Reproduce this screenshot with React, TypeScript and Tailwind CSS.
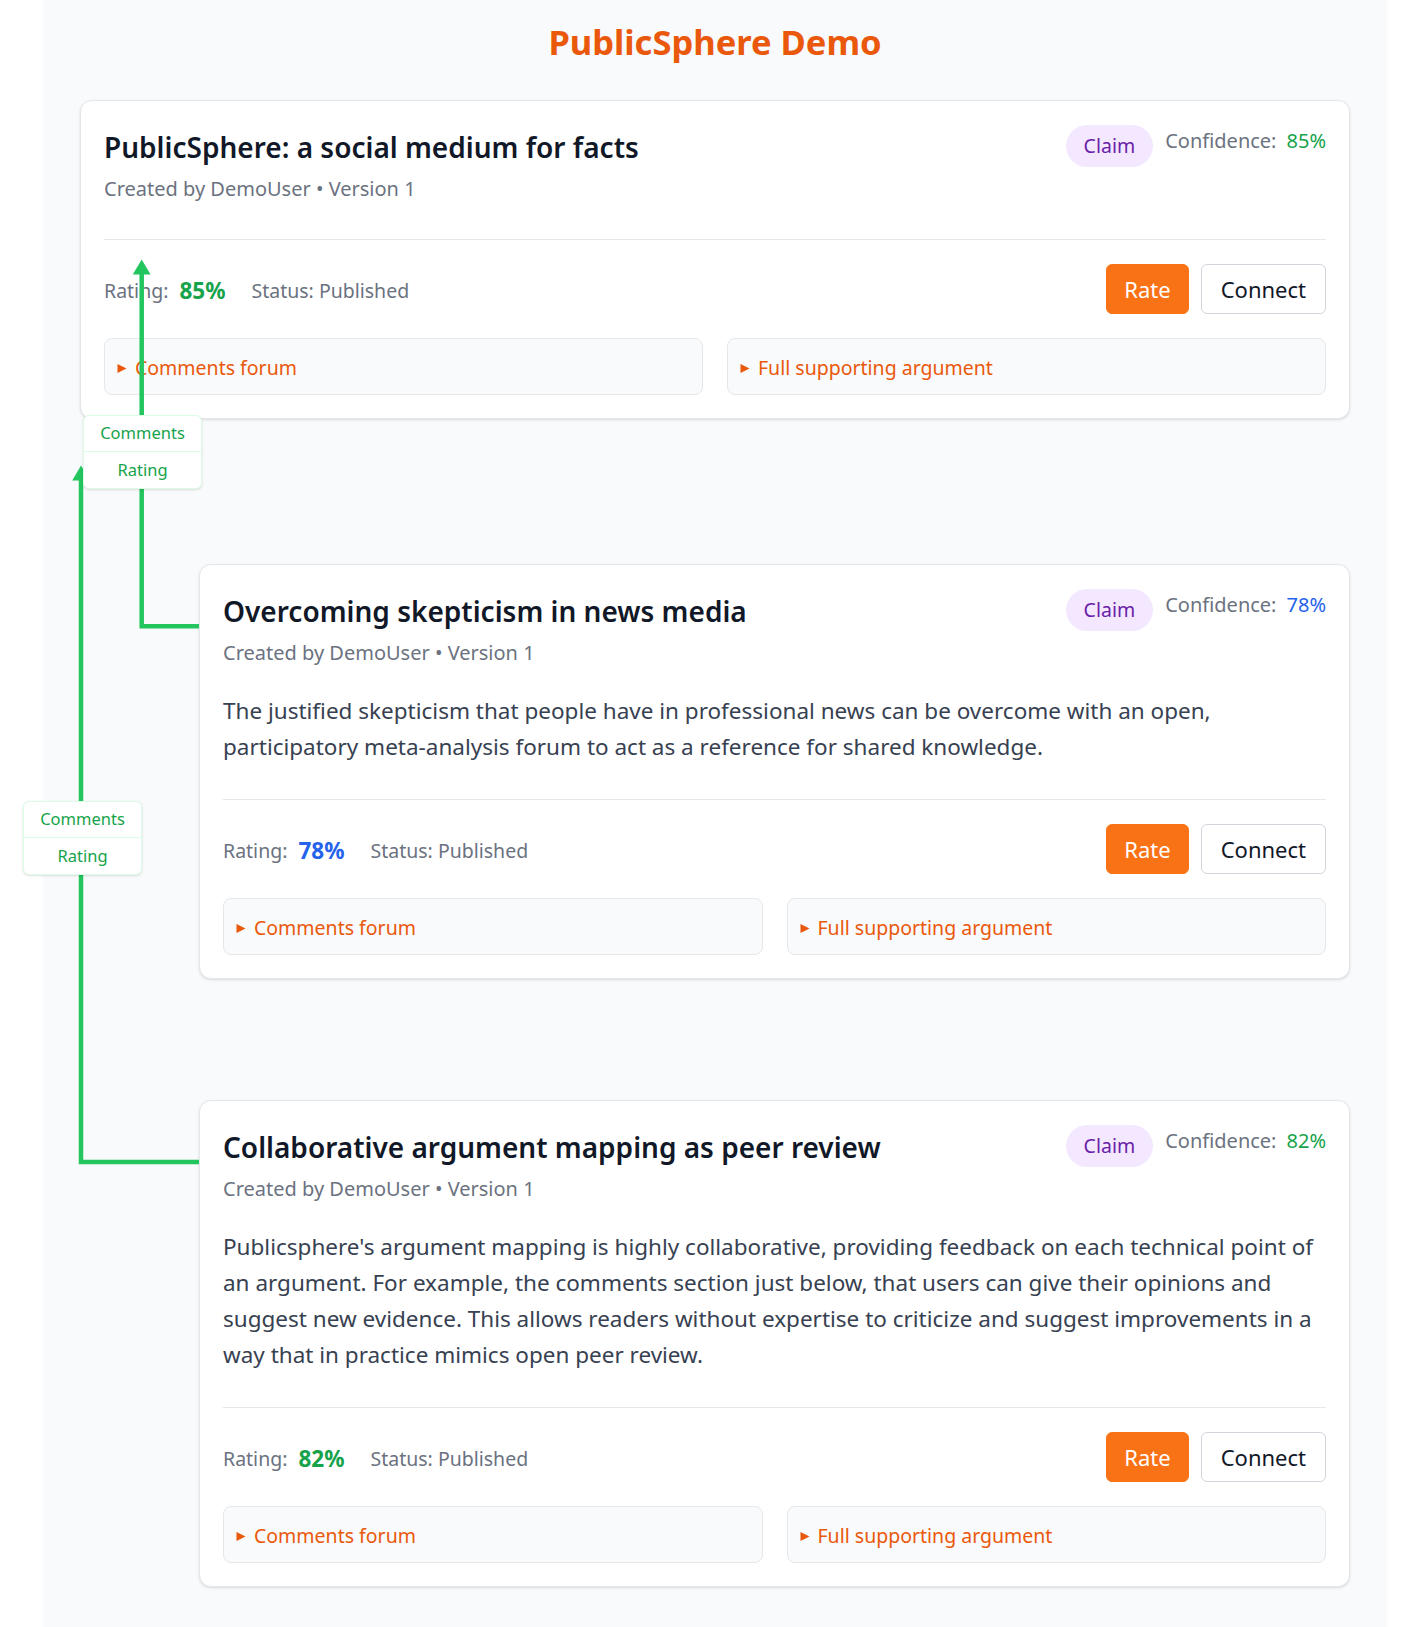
import clsx from 'clsx';

type Claim = {
  title: string;
  description?: string;
  confidence: number;
  tone: 'green' | 'blue';
};

const claims: Claim[] = [
  {
    title: 'PublicSphere: a social medium for facts',
    confidence: 85,
    tone: 'green',
  },
  {
    title: 'Overcoming skepticism in news media',
    description:
      'The justified skepticism that people have in professional news can be overcome with an open, participatory meta-analysis forum to act as a reference for shared knowledge.',
    confidence: 78,
    tone: 'blue',
  },
  {
    title: 'Collaborative argument mapping as peer review',
    description:
      "Publicsphere's argument mapping is highly collaborative, providing feedback on each technical point of an argument. For example, the comments section just below, that users can give their opinions and suggest new evidence. This allows readers without expertise to criticize and suggest improvements in a way that in practice mimics open peer review.",
    confidence: 82,
    tone: 'green',
  },
];

function Disclosure({ label }: { label: string }) {
  return (
    <details className="rounded-lg border border-[#e5e7eb] bg-[#f9fafb]">
      <summary className="flex cursor-pointer list-none items-center pb-[12px] pl-[12px] pt-[15px] text-[19.5px] leading-[28px] text-[#ea580c] [&::-webkit-details-marker]:hidden">
        <svg width="10" height="9" viewBox="0 0 10 9" className="shrink-0">
          <path d="M0.5 0 L9.5 4.5 L0.5 9 Z" fill="currentColor" />
        </svg>
        <span className="ml-[8px]">{label}</span>
      </summary>
    </details>
  );
}

function ClaimCard({ claim, className }: { claim: Claim; className?: string }) {
  const valueColor = claim.tone === 'blue' ? 'text-[#2563eb]' : 'text-[#16a34a]';

  return (
    <div className={clsx('rounded-xl border border-[#e5e7eb] bg-white p-[23px] shadow-sm', className)}>
      {/* Header */}
      <div className="flex items-start justify-between gap-6 pt-px">
        <div>
          <h2 className="text-[28px] font-semibold leading-[44px] text-[#111827]">{claim.title}</h2>
          <p className="mt-[6px] text-[20px] leading-[28px] text-[#6b7280]">Created by DemoUser • Version 1</p>
        </div>
        <div className="flex shrink-0 items-start gap-3">
          <span className="rounded-full bg-[#f3e8ff] px-[18px] py-[7px] text-[19.5px] leading-[28px] text-[#6b21a8]">
            Claim
          </span>
          <div className="mt-[2px] flex items-center text-[20px] leading-[28px] text-[#6b7280]">
            <span>Confidence:</span>
            <span className={clsx('ml-[10px] text-[20px]', valueColor)}>{claim.confidence}%</span>
          </div>
        </div>
      </div>

      {claim.description && (
        <p className="mt-[26px] text-[22.5px] leading-[36px] text-[#374151]">{claim.description}</p>
      )}

      {/* Footer */}
      <div className={clsx('border-t border-[#e5e7eb] pt-6', claim.description ? 'mt-[34px]' : 'mt-[36px]')}>
        <div className="flex items-center justify-between">
          <div className="flex items-center pt-[3px] text-[19.5px] leading-[28px] text-[#6b7280]">
            <span>Rating:</span>
            <span className={clsx('ml-[11px] text-[22.5px] font-bold', valueColor)}>{claim.confidence}%</span>
            <span className="ml-[26px]">Status: Published</span>
          </div>
          <div className="flex gap-3">
            <button className="rounded-md border border-[#f97316] bg-[#f97316] px-[17px] py-[9px] text-[22px] leading-[30px] text-white">
              Rate
            </button>
            <button className="rounded-md border border-[#d1d5db] bg-white px-[19px] py-[9px] text-[22px] leading-[30px] text-[#111827]">
              Connect
            </button>
          </div>
        </div>
        <div className="mt-6 grid grid-cols-2 gap-6">
          <Disclosure label="Comments forum" />
          <Disclosure label="Full supporting argument" />
        </div>
      </div>
    </div>
  );
}

function ConnectionLabel({ className }: { className: string }) {
  return (
    <div
      className={clsx(
        'absolute w-[119px] overflow-hidden rounded-md border border-[#dcfce7] bg-white text-[16.5px] text-[#16a34a] shadow-sm',
        className
      )}
    >
      <div className="flex h-[36px] items-center justify-center border-b border-[#dcfce7]">Comments</div>
      <div className="flex h-[36px] items-center justify-center">Rating</div>
    </div>
  );
}

export default function App() {
  return (
    <div className="relative min-h-screen bg-white font-['Noto_Sans',sans-serif]">
      <div className="ml-[43px] min-h-screen w-[1344px] bg-[#f9fafb] px-[37px] pb-[40px] pt-[22px]">
        <h1 className="text-center text-[34.5px] font-bold leading-[40px] text-[#ea580c]">PublicSphere Demo</h1>

        <div className="mt-[38px]">
          <ClaimCard claim={claims[0]} />
          <ClaimCard claim={claims[1]} className="ml-[119px] mt-[145px]" />
          <ClaimCard claim={claims[2]} className="ml-[119px] mt-[121px]" />
        </div>
      </div>

      {/* Connection lines */}
      <svg
        className="pointer-events-none absolute left-0 top-0"
        width="1419"
        height="1627"
        viewBox="0 0 1419 1627"
      >
        <path d="M199 626.3 H141.7 V272" fill="none" stroke="#22c55e" strokeWidth="4.5" />
        <polygon points="141.7,259.5 132.8,274.5 150.6,274.5" fill="#22c55e" />
        <path d="M199 1162 H81 V478" fill="none" stroke="#22c55e" strokeWidth="4.5" />
        <polygon points="81,465.5 72.2,480.5 89.8,480.5" fill="#22c55e" />
      </svg>

      <ConnectionLabel className="left-[83px] top-[415px]" />
      <ConnectionLabel className="left-[23px] top-[801px]" />
    </div>
  );
}
